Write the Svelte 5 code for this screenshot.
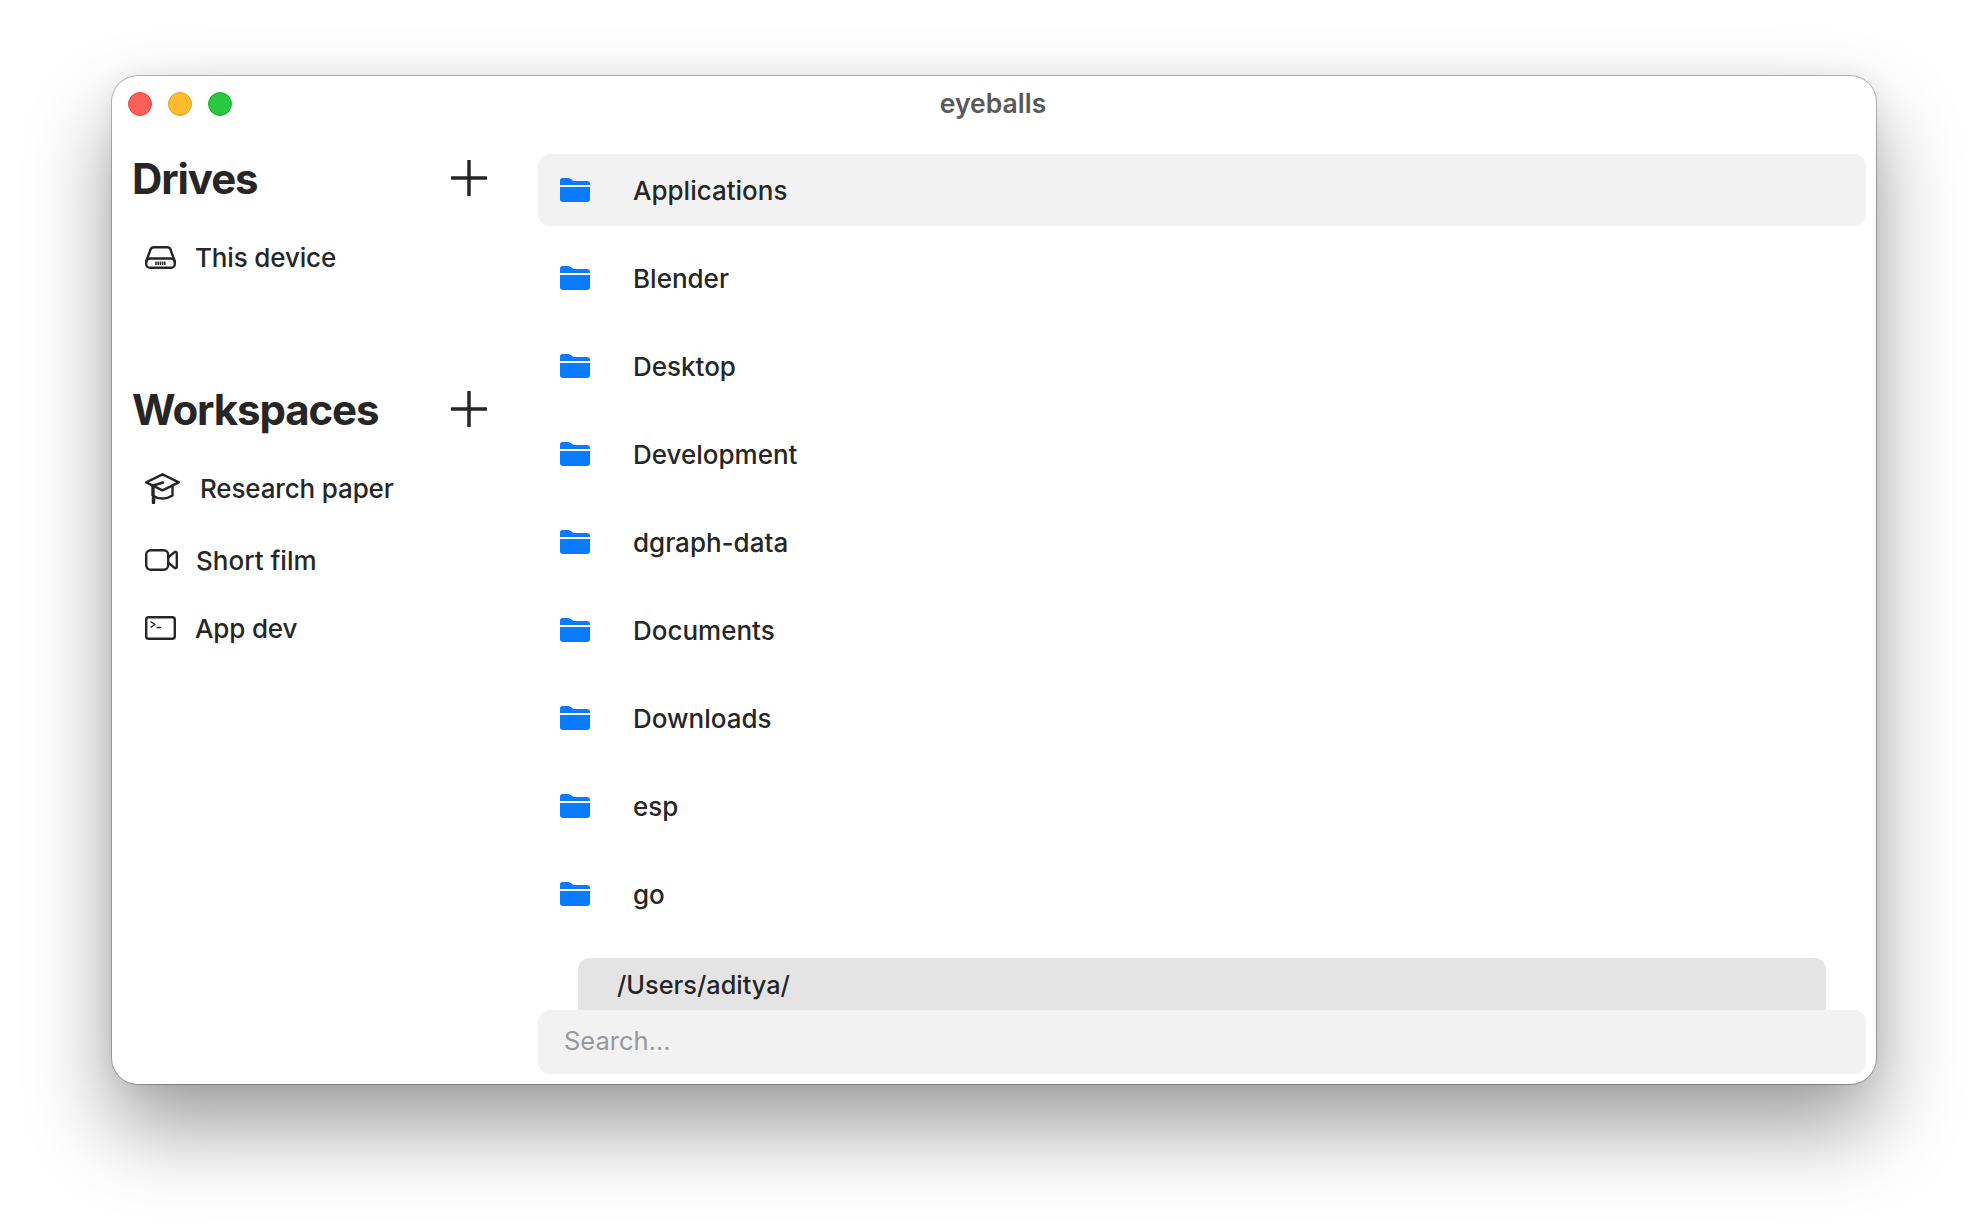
<script>
	const folders = ['Applications', 'Blender', 'Desktop', 'Development', 'dgraph-data', 'Documents', 'Downloads', 'esp', 'go'];
	let search = $state('');
</script>

<div class="page">
	<div class="window">
		<header class="titlebar">
			<div class="lights">
				<span class="light red"></span>
				<span class="light yellow"></span>
				<span class="light green"></span>
			</div>
			<div class="title">eyeballs</div>
		</header>

		<div class="body">
			<aside class="sidebar">
				<div class="section-head">
					<h2>Drives</h2>
					<button class="add" aria-label="Add drive">
						<svg viewBox="0 0 36 36" width="36" height="36"><path d="M18 1v34M1 18h34" /></svg>
					</button>
				</div>
				<div class="item drive">
					<svg class="ico" viewBox="0 0 31 23" width="31" height="23">
						<path d="M1.2 15.5 5.5 3.5Q6.3 1.2 9 1.2H22Q24.700 1.200 25.500 3.500L29.800 15.500" />
						<rect x="1.200" y="12.500" width="28.600" height="9.300" rx="3.800" />
						<path class="fine" d="M11 15.500v3.500M13.200 15.500v3.500M15.400 15.500v3.500M17.600 15.500v3.500M19.800 15.500v3.500" />
					</svg>
					<span>This device</span>
				</div>

				<div class="section-head workspaces">
					<h2>Workspaces</h2>
					<button class="add" aria-label="Add workspace">
						<svg viewBox="0 0 36 36" width="36" height="36"><path d="M18 1v34M1 18h34" /></svg>
					</button>
				</div>
				<div class="item research">
					<svg class="ico" viewBox="0 0 35 31" width="35" height="31">
						<path d="M17.500 1.300 33.800 9.300 17.500 17.300 1.200 9.300Z" />
						<path d="M7.500 13v9.500Q12 25.500 17.500 25.500T27.500 22.500V13" />
						<path d="M18 9.500 8.500 12.500V29" />
						<path class="thick" d="M8.500 25v4.500" />
					</svg>
					<span>Research paper</span>
				</div>
				<div class="item film">
					<svg class="ico" viewBox="0 0 33 22" width="33" height="22">
						<rect x="1.200" y="1.200" width="22" height="19.600" rx="4.500" />
						<path d="M23.200 8.500 29.500 3.200Q31.800 2 31.800 4.500V17.500Q31.800 20 29.500 18.800L23.200 13.500" />
					</svg>
					<span>Short film</span>
				</div>
				<div class="item terminal">
					<svg class="ico" viewBox="0 0 31 24" width="31" height="24">
						<rect x="1.200" y="1.200" width="28.600" height="21.600" rx="2.500" />
						<path class="fine" d="M5.500 5.500 10 8.500 5.500 11.500M11.500 11.500H16" />
					</svg>
					<span>App dev</span>
				</div>
			</aside>

			<main class="main">
				<ul class="list">
					{#each folders as name, i}
						<li class="row" class:selected={i === 0}>
							<svg class="folder" viewBox="0 0 30 24" width="30" height="24">
								<path d="M0 7V2.500Q0 0 2.500 0H8Q10 0 11.500 1.500 13 3 15 3H27Q30 3 30 6V7Z" />
								<path d="M0 9H30V21Q30 24 27 24H3Q0 24 0 21Z" />
							</svg>
							<span>{name}</span>
						</li>
					{/each}
				</ul>
				<div class="path">/Users/aditya/</div>
				<input class="search" placeholder="Search..." bind:value={search} />
			</main>
		</div>
	</div>
</div>

<style>
	:global(body) {
		margin: 0;
		background: #fff;
		font-family: Inter, "Liberation Sans", sans-serif;
		color: #262626;
	}

	.page {
		width: 1988px;
		height: 1232px;
		box-sizing: border-box;
		padding: 76px 112px 148px;
		overflow: hidden;
	}

	.window {
		height: 100%;
		background: #fff;
		border-radius: 26px;
		box-shadow: 0 0 0 1px rgba(0, 0, 0, 0.25), 0 44px 84px rgba(0, 0, 0, 0.38), 0 0 24px rgba(0, 0, 0, 0.07);
		display: flex;
		flex-direction: column;
		overflow: hidden;
	}

	.titlebar {
		height: 78px;
		flex: none;
		position: relative;
		display: flex;
		align-items: center;
		justify-content: center;
	}

	.lights {
		position: absolute;
		left: 16px;
		top: 16px;
		display: flex;
		gap: 16px;
	}

	.light {
		width: 24px;
		height: 24px;
		border-radius: 50%;
		box-sizing: border-box;
	}

	.red { background: #ff5f57; border: 1px solid #e5483f; }
	.yellow { background: #febc2e; border: 1px solid #dfa023; }
	.green { background: #28c840; border: 1px solid #1fad34; }

	.title {
		font-size: 26.500px;
		font-weight: 600;
		color: #595959;
		margin-top: -25px;
		margin-right: 2px;
	}

	.body {
		flex: 1;
		display: flex;
		min-height: 0;
	}

	.sidebar {
		width: 426px;
		flex: none;
		box-sizing: border-box;
		padding: 0 51px 0 20px;
	}

	.section-head {
		display: flex;
		align-items: center;
		justify-content: space-between;
		height: 50px;
		margin-top: -1px;
	}

	.section-head.workspaces {
		margin-top: 107px;
	}

	h2 {
		margin: 0;
		font-size: 42px;
		font-weight: 700;
		letter-spacing: -1.100px;
		color: #262626;
	}

	.add {
		border: none;
		background: none;
		padding: 0;
		width: 36px;
		height: 36px;
	}

	.add svg {
		display: block;
	}

	.add path {
		fill: none;
		stroke: #262626;
		stroke-width: 3.5;
		stroke-linecap: round;
	}

	.item {
		display: flex;
		align-items: center;
		padding-left: 13px;
		gap: 19px;
		font-size: 26px;
		font-weight: 500;
		letter-spacing: -0.150px;
		height: 40px;
	}

	.drive { margin-top: 34px; }
	.research { margin-top: 34px; gap: 20px; }
	.film { margin-top: 32px; gap: 18px; letter-spacing: 0; }
	.terminal { margin-top: 28px; }

	.ico {
		flex: none;
		fill: none;
		stroke: #262626;
		stroke-width: 2.4;
		stroke-linejoin: round;
		stroke-linecap: round;
	}

	.ico .fine {
		stroke-width: 1.5;
		stroke-linecap: butt;
	}

	.ico .thick {
		stroke-width: 3.500;
	}

	.main {
		flex: 1;
		min-width: 0;
		display: flex;
		flex-direction: column;
		padding: 0 10px 10px 0;
	}

	.list {
		list-style: none;
		margin: 0;
		padding: 0;
		flex: 1;
		min-height: 0;
		display: flex;
		flex-direction: column;
		gap: 16px;
		overflow: hidden;
	}

	.row {
		height: 72px;
		flex: none;
		display: flex;
		align-items: center;
		padding-left: 22px;
		gap: 43px;
		border-radius: 12px;
		font-size: 26px;
		font-weight: 500;
	}

	.row.selected {
		background: #f2f2f2;
	}

	.folder {
		flex: none;
		fill: #0a7aff;
	}

	.path {
		margin: 0 40px;
		height: 52px;
		flex: none;
		box-sizing: border-box;
		padding-left: 39px;
		display: flex;
		align-items: center;
		background: #e4e4e4;
		border-radius: 12px 12px 0 0;
		font-size: 25.300px;
		font-weight: 500;
	}

	.search {
		flex: none;
		height: 64px;
		box-sizing: border-box;
		border: none;
		outline: none;
		border-radius: 12px;
		background: #f2f2f2;
		padding: 0 26px 3px;
		font: 400 25.500px Inter, "Liberation Sans", sans-serif;
		color: #262626;
	}

	.search::placeholder {
		color: #98989d;
		opacity: 1;
	}
</style>
